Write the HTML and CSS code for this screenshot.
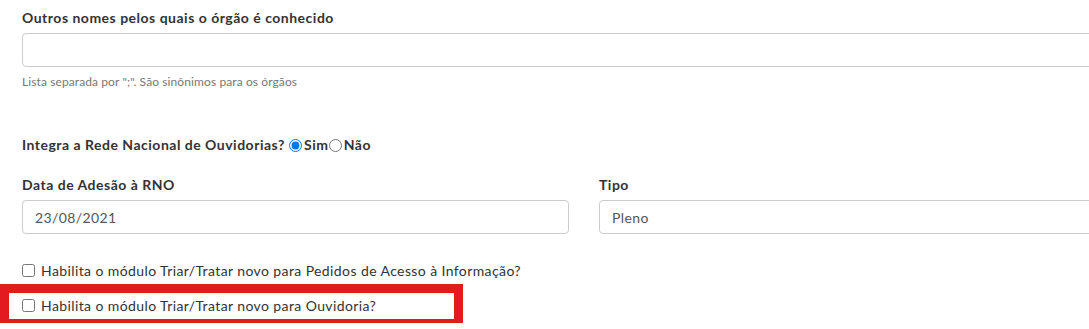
FILE: index.html
```html
<!DOCTYPE html>
<html lang="pt-BR">
<head>
    <meta charset="UTF-8">
    <meta name="viewport" content="width=device-width, initial-scale=1.0">
    <title>Cadastro de Órgão</title>
    <link rel="stylesheet" href="styles.css">
</head>
<body>

    <form class="orgao-form">
        <!-- Outros nomes -->
        <div class="form-group">
            <label class="control-label" for="outrosNomes">Outros nomes pelos quais o órgão é conhecido</label>
            <input type="text" id="outrosNomes" class="form-control">
            <span class="help-block">Lista separada por ";". São sinônimos para os órgãos</span>
        </div>

        <!-- Rede Nacional de Ouvidorias -->
        <div class="form-group rede-group">
            <span class="control-label">Integra a Rede Nacional de Ouvidorias?</span>
            <label class="radio-inline"><input type="radio" name="rno" checked> Sim</label>
            <label class="radio-inline"><input type="radio" name="rno"> Não</label>
        </div>

        <div class="row">
            <div class="form-group">
                <label class="control-label" for="dataAdesao">Data de Adesão à RNO</label>
                <input type="text" id="dataAdesao" class="form-control" value="23/08/2021">
            </div>
            <div class="form-group">
                <label class="control-label" for="tipo">Tipo</label>
                <input type="text" id="tipo" class="form-control" value="Pleno">
            </div>
        </div>

        <div class="checkbox">
            <label><input type="checkbox"> Habilita o módulo Triar/Tratar novo para Pedidos de Acesso à Informação?</label>
        </div>
        <div class="checkbox destaque">
            <label><input type="checkbox"> Habilita o módulo Triar/Tratar novo para Ouvidoria?</label>
            <!-- Marcação de destaque -->
            <span class="destaque-marca"></span>
        </div>
    </form>

</body>
</html>
```

FILE: styles.css
```css
body {
    font-family: Lato, "Open Sans", Arial, sans-serif;
    font-size: 14px;
    line-height: 20px;
    letter-spacing: 0.4px;
    color: #333;
    margin: 0;
    padding: 0;
    background-color: white;
    overflow: hidden;
}

.orgao-form {
    width: 1124px;
    padding: 8px 0 0 22px;
}

.form-group {
    margin-bottom: 15px;
}

.control-label {
    display: block;
    font-weight: bold;
    letter-spacing: 0.5px;
    margin-bottom: 5px;
}

.form-control {
    display: block;
    box-sizing: border-box;
    width: 100%;
    height: 34px;
    padding: 6px 12px;
    font-family: inherit;
    font-size: 14px;
    letter-spacing: 0.4px;
    color: #555;
    background-color: white;
    border: 1px solid #ccc;
    border-radius: 4px;
    margin: 0;
}

.help-block {
    display: block;
    margin-top: 5px;
    font-size: 12px;
    letter-spacing: 0.1px;
    color: #777;
}

.rede-group {
    display: flex;
    align-items: center;
    margin-top: 43px;
    margin-bottom: 20px;
}

.rede-group .control-label {
    display: inline;
    margin: 0 4px 0 0;
}

.radio-inline {
    display: flex;
    align-items: center;
    font-weight: bold;
    letter-spacing: 0.6px;
}

.radio-inline input {
    margin: 0 2px 0 0;
    width: 13px;
    height: 13px;
}

.row {
    display: grid;
    grid-template-columns: 1fr 1fr;
    column-gap: 30px;
    margin-bottom: 19px;
}

.row .form-group {
    margin-bottom: 0;
}

.checkbox {
    position: relative;
    height: 35px;
    display: flex;
    align-items: center;
}

.checkbox label {
    display: flex;
    align-items: center;
}

.checkbox input {
    margin: 0 6px 0 0;
    width: 13px;
    height: 13px;
}

.destaque-marca {
    position: absolute;
    left: -22px;
    top: -4px;
    width: 445px;
    height: 26px;
    border: 9px solid #e31b1e;
}
```
